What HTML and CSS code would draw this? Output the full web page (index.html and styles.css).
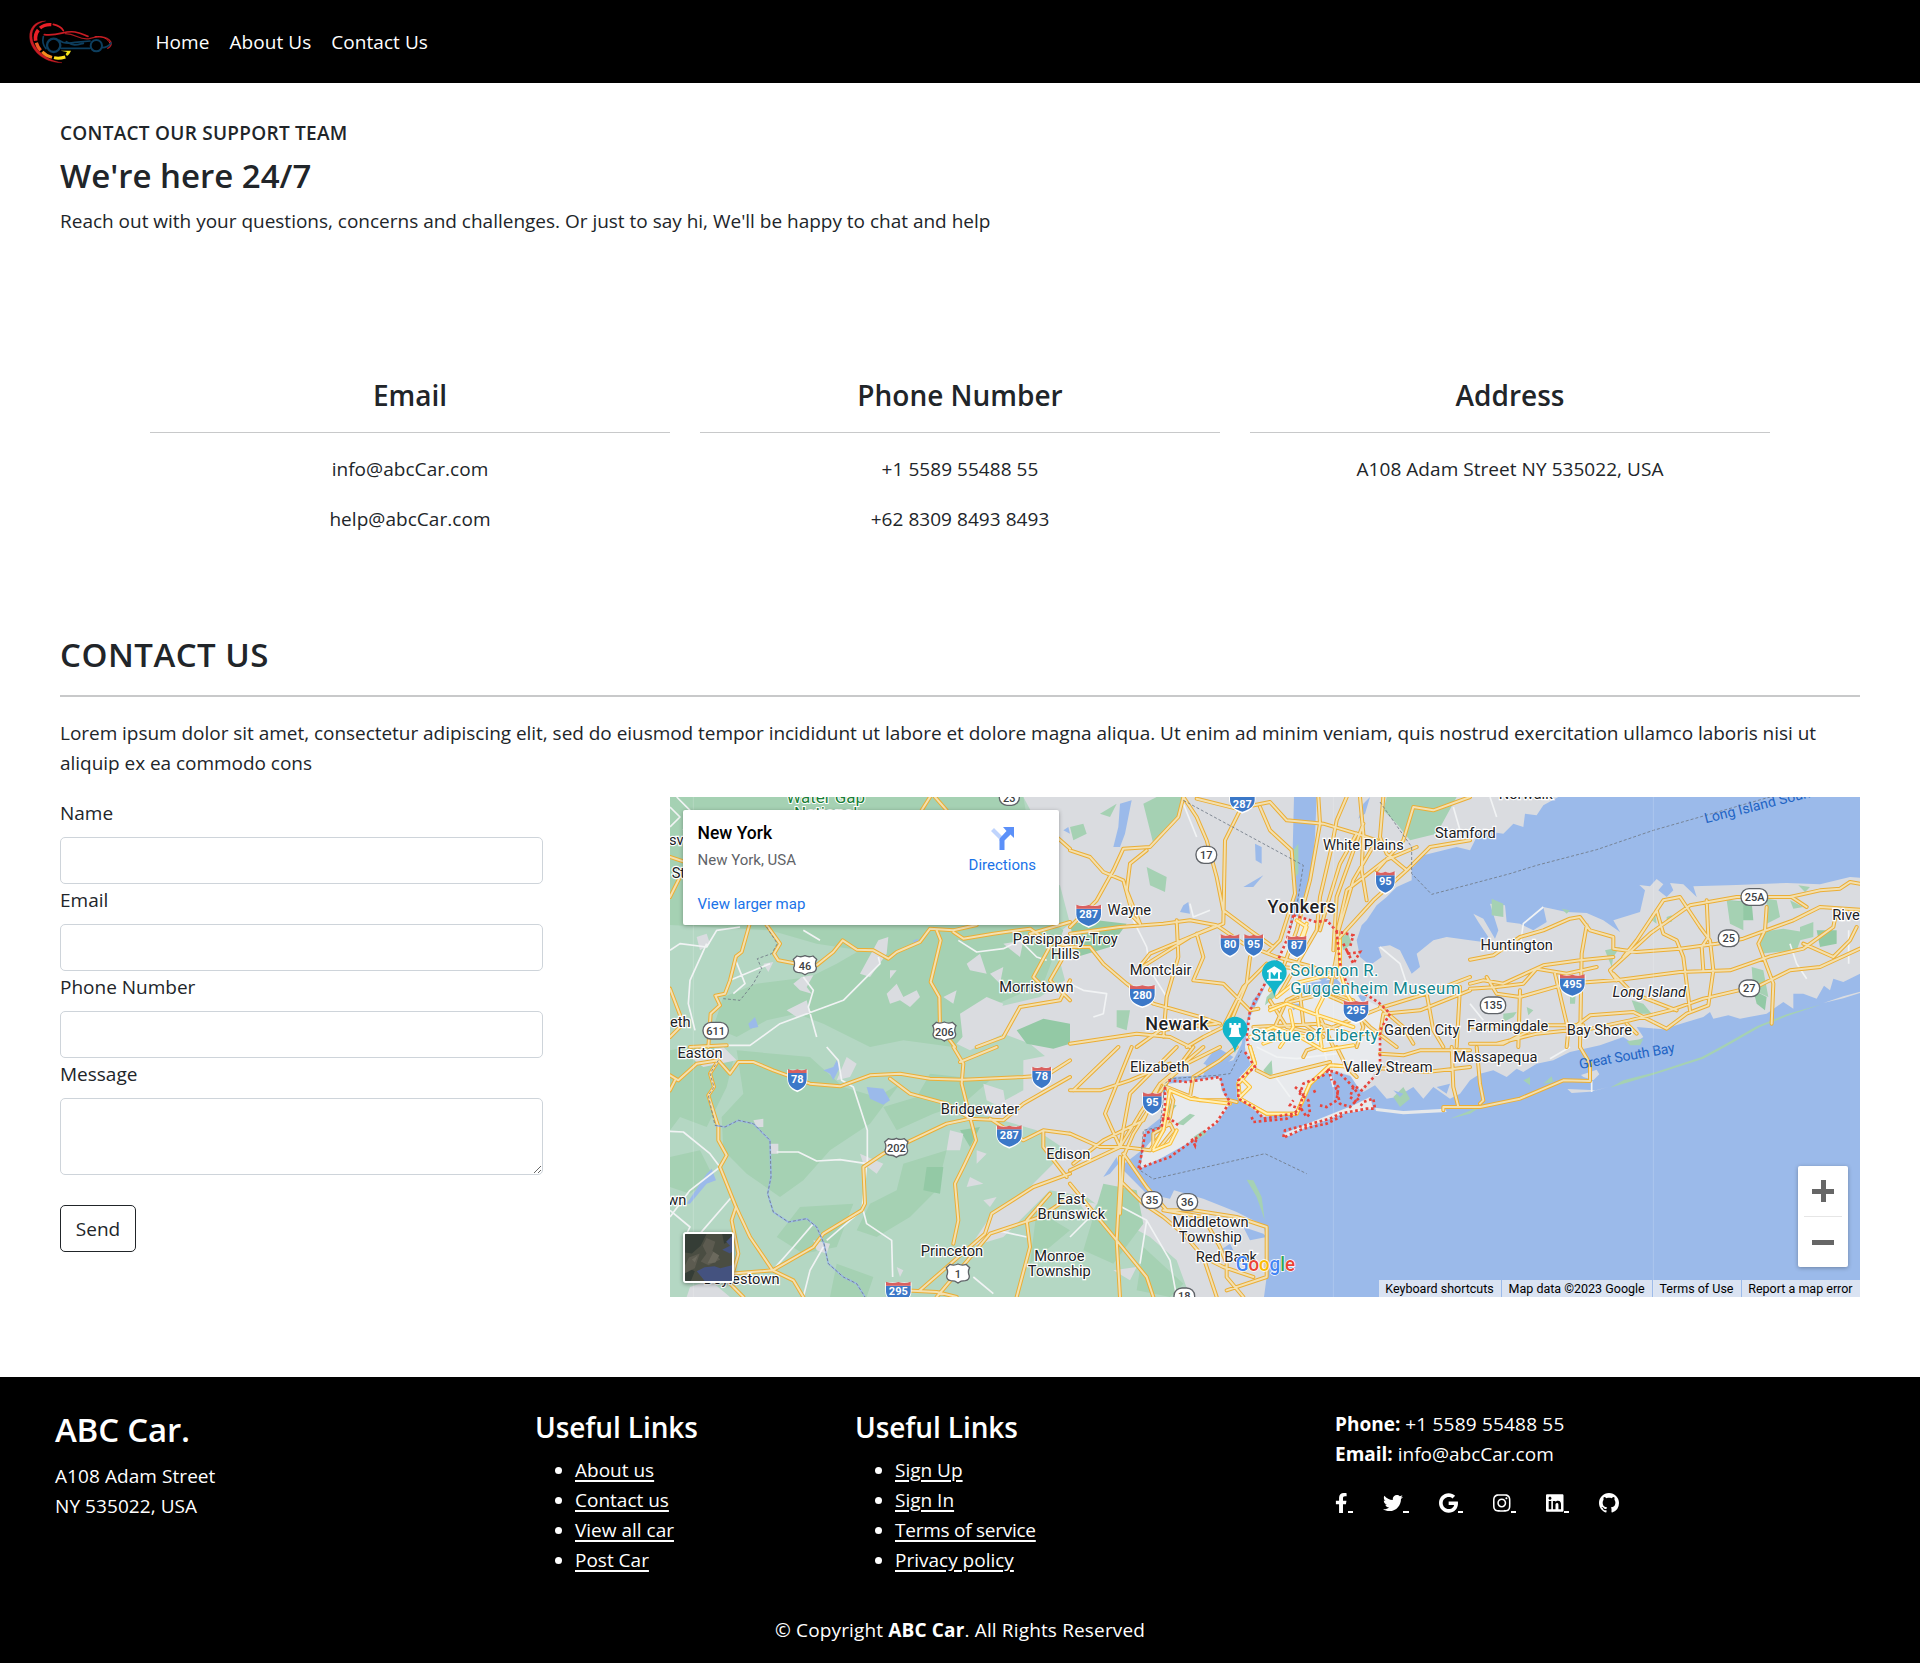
FILE: index.html
```html
<!DOCTYPE html>
<html lang="en">
<head>
<meta charset="utf-8">
<title>ABC Car - Contact Us</title>
<link rel="stylesheet" href="styles.css">
</head>
<body>
<header class="navbar">
  <svg class="logo" viewBox="81 51 261 144" fill="none" stroke-linecap="round">
    <path d="M136 60C104 60 88 82 89 108C90 146 130 186 186 185C145 180 97 146 96 106C95 83 110 66 136 60Z" fill="#c91c24" stroke="#c91c24"/>
    <path d="M154 71C140 70 128 74 120 81" stroke="#ec2027" stroke-width="10" stroke-linecap="butt"/>
    <path d="M115 87C108 95 105 106 107 119" stroke="#ec2027" stroke-width="11" stroke-linecap="butt"/>
    <path d="M109 125C112 135 116 142 122 148" stroke="#ef5a25" stroke-width="10" stroke-linecap="butt"/>
    <path d="M127 152C135 161 145 166 156 169" stroke="#f68b1f" stroke-width="9" stroke-linecap="butt"/>
    <path d="M162 170C174 173 186 171 196 168" stroke="#fde21c" stroke-width="9" stroke-linecap="butt"/>
    <path d="M182 149H213C210 156 207 160 201 165L197 160L201 153Z" fill="#f5e51d"/>
    <path d="M160 70C175 73 185 80 190 89" stroke="#d81f26" stroke-width="5"/>
    <path d="M133 101C180 106 190 88 225 93C250 97 255 105 264 106" stroke="#c91c24" stroke-width="5"/>
    <path d="M196 98C230 98 235 118 268 113C290 105 320 104 332 122C336 130 331 139 323 142" stroke="#a81b20" stroke-width="4"/>
    <path d="M285 107C305 104 325 113 330 127" stroke="#d81f26" stroke-width="3"/>
    <path d="M130 107C126 122 132 136 138 143M178 118C190 128 205 128 225 124L270 120M183 142H270M306 140C320 140 328 133 333 126M199 122C220 136 230 132 250 127" stroke="#0d3e5e" stroke-width="5"/>
    <circle cx="161" cy="133" r="20" stroke="#0d3e5e" stroke-width="7"/>
    <circle cx="289" cy="134" r="17" stroke="#0d3e5e" stroke-width="6"/>
  </svg>
  <nav class="nav-links"><a>Home</a><a>About Us</a><a>Contact Us</a></nav>
</header>

<main>
  <section class="intro">
    <h5>CONTACT OUR SUPPORT TEAM</h5>
    <h2>We're here 24/7</h2>
    <p>Reach out with your questions, concerns and challenges. Or just to say hi, We'll be happy to chat and help</p>
  </section>

  <section class="channels">
    <div class="channel"><h3>Email</h3><p>info@abcCar.com</p><p>help@abcCar.com</p></div>
    <div class="channel"><h3>Phone Number</h3><p>+1 5589 55488 55</p><p>+62 8309 8493 8493</p></div>
    <div class="channel"><h3>Address</h3><p>A108 Adam Street NY 535022, USA</p></div>
  </section>

  <section class="contact">
    <h2>CONTACT US</h2>
    <p>Lorem ipsum dolor sit amet, consectetur adipiscing elit, sed do eiusmod tempor incididunt ut labore et dolore magna aliqua. Ut enim ad minim veniam, quis nostrud exercitation ullamco laboris nisi ut<br>aliquip ex ea commodo cons</p>
    <div class="contact-row">
      <form class="contact-form">
        <label>Name</label><input type="text">
        <label>Email</label><input type="text">
        <label>Phone Number</label><input type="text">
        <label>Message</label><textarea></textarea>
        <button type="button">Send</button>
      </form>
      <div class="map">
        <svg class="map-canvas" viewBox="0 0 3570 1500">
          <defs>
            <g id="roads">
              <path d="M0 180L60 200M0 300L40 220M238 384L215 465L198 478L180 550L165 590L136 596L150 625L122 650L115 750M290 384L330 440L312 470L325 490L380 500L440 505L490 465L518 430L560 458L610 460L655 485L680 465L750 435L780 395L850 400L920 384M800 400L812 430L782 555L808 600L810 690L855 750M0 575L40 680L0 720M60 750L170 745"/>
              <path d="M850 405L880 425L970 410L1080 395L1130 430L1200 450M1150 430L1090 540L1120 570M1200 550L1170 610L1050 630L1000 720L920 750M1180 480L1140 550L1200 610M1200 375L1080 410"/>
              <path d="M780 0L755 40M795 0L830 40M1160 120L1200 155"/>
              <path d="M0 835L25 850L80 800L145 790L180 830L205 795L250 795L310 820L420 860L510 868L600 835L690 830L780 845L880 848L1060 840L1130 835L1200 790M15 850L0 880M145 790L120 830L132 870L115 895L145 990L145 1030L170 1075L150 1110L198 1230L185 1270L205 1370L180 1460L220 1500"/>
              <path d="M198 1230L240 1320L308 1420L430 1350L460 1310L575 1240L585 1220L580 1110L640 1070L830 980L900 965L1000 970L1060 920L1200 840M850 750L880 800L875 860L900 960L918 1030L880 1110L855 1160L865 1270L850 1340M870 795L980 750M660 845L720 890L830 920L900 965M960 965L1060 1030L1120 1000L1200 1010M1120 1000L1120 1050L1190 1140M180 1430L308 1420L370 1450L400 1500M1200 1130L1090 1170L965 1250L945 1310L750 1480M1200 1200L1110 1260L960 1310L800 1500M1140 1190L1070 1270L1080 1350L1040 1500M700 1480L800 1485L860 1500"/>
              <path d="M1540 0L1525 60L1440 150L1360 155L1330 220L1280 310L1200 390M1540 0L1580 60L1610 130L1640 240L1660 340L1740 400L1810 450M1710 40L1665 130L1660 380L1560 420L1440 470L1400 520M1580 5L1700 35L1800 15L1850 70L1960 80L2060 110L2120 130M1770 30L1800 100L1865 160L1875 290L1830 430L1795 465M1200 160L1260 180L1300 225L1360 250L1390 360L1410 380M1430 160L1380 200L1370 280L1410 380M1200 410L1350 390L1480 380L1560 370L1640 385L1720 440L1820 480L1930 510L1980 540M1520 370L1525 480L1490 600L1480 720M1200 450L1260 450L1300 500L1370 560L1450 620L1590 660L1650 680M1400 520L1480 470L1560 420L1630 390M1560 750L1500 720L1400 710L1200 740M1400 750L1470 700L1550 690L1640 680M1580 410L1600 480L1570 550L1660 560L1740 640L1765 635M1740 480L1730 560L1680 680L1600 720L1550 750M1790 500L1720 570L1660 690"/>
              <path d="M1945 0L1950 80L1920 250L1880 400L1840 510L1800 580M2030 0L2000 70L1985 150L1950 300L1940 400L1830 590M2060 110L2010 200L1970 330L1950 400M2080 80L2000 300L1990 460M2120 130L2050 250L2000 420M2240 150L2145 190L2030 280L2005 390L2000 540M2400 130L2280 150L2210 220L2110 310L2010 420L1980 580M2210 220L2150 170L2130 120L2140 0M2070 0L2080 110L2075 220L2090 310M2400 0L2290 40L2230 30L2200 130L2120 220M1840 510L1920 520L1980 520M1800 610L1850 690L1940 710L2040 670L2140 630L2270 590L2400 540M1800 630L1960 590L2030 620L2100 690L2180 750M1810 700L1850 610L1890 590L1900 680L1960 720M1750 690L1950 680L2040 710L2130 710L2140 650L2250 640L2400 580M1950 660L1990 750M2060 750L2080 690L2050 610L1990 590M2130 630L2200 690L2230 740M2270 590L2290 700L2320 750M2370 570L2360 750"/>
              <path d="M2400 488L2470 475L2550 420L2620 400L2700 365L2730 360L2760 400L2830 420L2830 455L2900 465L3030 455L3140 440L3220 425L3370 370L3450 330L3570 338M2750 385L2735 470L2730 750M2400 560L2440 550L2500 560L2620 505L2730 490L2830 480M2400 575L2480 570L2560 560L2600 515L2690 530L2780 510M2450 540L2480 590L2550 600L2690 560L2850 548L3030 525L3180 520L3300 478L3400 455L3490 390L3500 340M2655 530L2695 700L2690 750M2550 580L2545 750M2840 550L2820 520L2940 410L3060 325L3200 300L3360 300L3450 280L3510 275L3540 255L3570 260M2860 480L2900 430L2960 340L2980 310L3030 300L3090 390L3120 430L3130 520L3115 625L3050 650L2990 695L2890 645L2760 655L2700 700L2600 710L2480 740M2960 340L2980 410L3020 430L3040 480L3060 640M3110 310L3115 420L3095 450L3100 520M3290 330L3285 400L3265 440L3310 560L3305 680M3400 440L3490 480L3540 430L3560 390M3365 300L3410 330M2740 700L2880 670L3000 640L3100 605L3270 565L3360 520L3450 510L3570 455M2400 690L2570 685L2740 685M2870 680L2900 710M2400 740L2500 740L2600 690M2830 530L2890 590L3020 640"/>
              <path d="M1345 750L1210 880M1520 750L1380 890L1350 1050L1200 1120M1600 750L1470 860L1410 950L1350 1050M1570 750L1480 870L1390 1010L1360 1080L1350 1250M1650 750L1550 800L1480 860M1200 1010L1290 1050L1360 1050L1440 1060L1480 1000L1500 960L1510 910L1490 870L1590 910L1680 910L1700 915M1385 750L1305 950L1350 1050M1500 800L1380 850L1290 880L1200 880M1350 1080L1350 1150L1420 1220L1480 1260L1540 1310L1600 1380L1640 1500M1350 1150L1340 1330L1350 1500M1200 1160L1340 1330L1430 1440L1450 1500M1360 1070L1430 1170L1490 1240L1570 1240L1700 1260L1790 1290L1790 1440L1670 1480M1480 1240L1600 1260L1650 1350L1670 1400L1670 1440L1720 1500M1210 1100L1300 1030L1420 970L1470 860M1600 1380L1660 1410L1750 1440M1450 1060L1450 1010L1500 980L1510 1000L1470 1050M1560 900L1570 840L1650 790L1700 750"/>
              <path d="M1740 750L1755 800L1705 860L1710 905L1790 950L1880 950L1920 860L1980 805L2150 815M1760 820L1800 840L1920 810L1980 795M2000 750L2030 810L2060 840M1900 780L1910 760L1940 750M2130 770L2200 775L2250 760L2400 760M2150 815L2270 825L2400 810M2345 750L2350 870L2365 930L2320 930L2320 940M2365 930L2430 930L2550 905L2680 850L2760 852L2760 800L2730 750M2420 750L2430 860L2440 910L2430 920"/>
            </g>
            <path id="streets" d="M1800 640L1850 620L1930 650L2050 690M1740 720L1810 690L1890 720L1960 760L2050 745M1820 600L1870 560L1990 530M1880 480L1910 390L1880 370M1910 380L1890 430M1830 750L1870 690L1860 640M1960 600L1940 640L1955 750M2010 430V520L2030 590L2060 640M1780 740L1860 710L1950 725M1720 850L1740 870L1710 900M1740 750L1755 800L1705 860L1710 905L1790 950L1880 950L1920 860L1980 805L2080 812M1500 880L1560 905L1680 920M1500 880L1480 1000L1450 1055M1520 1000L1500 1040L1450 1060"/>
            <g id="interstate"><path d="M-28-24H28V0C28 20 14 32 0 38C-14 32-28 20-28 0Z" fill="#fff" stroke="#fff" stroke-width="5"/><path d="M-28-17H28V0C28 20 14 30 0 35C-14 30-28 20-28 0Z" fill="#3b78c8"/><path d="M-28-17V-29C-19-24-9-24 0-28C9-24 19-24 28-29V-17Z" fill="#d9605f"/></g>
            <g id="interstate-wide"><path d="M-37-24H37V0C37 20 18 32 0 38C-18 32-37 20-37 0Z" fill="#fff" stroke="#fff" stroke-width="5"/><path d="M-37-17H37V0C37 20 18 30 0 35C-18 30-37 20-37 0Z" fill="#3b78c8"/><path d="M-37-17V-29C-25-24-12-24 0-28C12-24 25-24 37-29V-17Z" fill="#d9605f"/></g>
            <path id="us-route" d="M-24-27Q-12-22 0-28Q12-22 24-27L35-17Q28-5 34 8Q34 20 22 22Q8 22 0 29Q-8 22-22 22Q-34 20-34 8Q-28-5-35-17Z"/>
          </defs>

          <rect width="3570" height="1500" fill="#9bbaea"/>
          <path class="land" d="M0 0H1872L1868 160L1876 230L1866 330L1856 430L1815 500L1782 570L1748 610L1725 690L1715 740L1690 790L1650 800L1640 760L1610 800L1600 835L1500 840L1480 870L1475 960L1425 1000L1415 1060L1350 1110L1390 1150L1430 1190L1500 1205L1512 1180L1600 1205L1700 1245L1780 1285L1790 1330L1790 1440L1782 1500H0Z"/>
          <path class="land" d="M1940 0H2665L2620 25L2600 55L2565 50L2560 90L2530 80L2500 110L2430 100L2400 160L2360 150L2260 175L2225 215L2225 250L2180 270L2150 300L2120 325L2090 370L2075 385L2060 430L2070 480L2100 505L2135 480L2125 450L2160 445L2190 460L2225 530L2250 510L2240 470L2290 430L2330 420L2400 430L2440 435L2455 420L2425 375L2410 350L2440 365L2475 425L2485 400L2460 320L2505 325L2510 375L2550 380L2590 400L2630 375L2620 330L2690 345L2750 348L2800 370L2850 405L2830 370L2910 345L2925 280L2908 264L2940 268L2960 246L2980 262L2965 280L2990 300L3010 280L3000 258L3040 262L3080 300L3070 268L3200 264L3350 258L3450 262L3540 240L3570 242V530L3520 555L3490 545L3480 580L3462 566L3440 605L3400 590L3370 590L3370 635L3340 615L3290 650L3210 665L3175 655L3130 665L3120 645L3100 660L3050 675L2980 697L2900 690L2920 720L2890 740L2860 720L2790 745L2700 765L2650 790L2600 800L2560 825L2540 815L2510 840L2470 820L2430 830L2400 850L2370 890L2340 905L2290 870L2260 905L2230 870L2180 900L2150 905L2115 865L2080 885L2050 840L2000 825L1940 830L1900 880L1880 950L1780 960L1700 900L1700 860L1745 810L1725 760L1730 700L1760 620L1790 600L1830 500L1870 400L1900 330L1925 230L1935 120Z"/>
          <path class="city" d="M1870 355L1940 375L1970 370L2000 410L2010 490L2030 560L2070 600L2130 630L2165 660L2130 700L2130 790L2100 850L2070 880L2040 835L1980 815L1920 850L1880 945L1780 955L1705 900L1700 850L1745 800L1725 750L1735 670L1780 580L1830 470Z"/>
          <path class="city" d="M1495 860L1650 840L1655 880L1680 920L1640 980L1570 1030L1480 1080L1410 1115L1420 1060L1470 1000L1480 900Z"/>
          <path class="city" d="M1840 1010L1900 985L2050 925L2100 900L2110 935L2020 950L1900 995L1845 1022Z"/>
          <path class="water" d="M1900 560L2000 545L2030 580L1960 600L1880 590ZM1920 530L1980 540L1960 555ZM1640 750L1690 780L1650 820L1600 800ZM1850 600L1870 620L1900 620L1870 640ZM2060 590L2090 600L2080 620ZM2100 0L2085 50L2065 65L2080 20ZM1350 20L1385 10L1365 110L1350 150L1330 150L1345 90ZM1720 270L1780 235L1750 270ZM1755 140L1775 150V200L1757 190ZM1540 325L1555 315L1560 350L1530 345Z"/>
          <path class="woods-light" d="M0 0H1060L1125 120L1060 230L1170 265L1200 380L1150 420L1185 550L1110 600L940 640L860 740L900 760L1000 710L1080 740L1140 790L1060 880L930 950L1100 1000L1190 1060L1080 1170L960 1260L900 1350L1000 1320L1140 1180L1250 1200L1330 1260L1440 1320L1520 1390L1560 1500H0Z"/>
          <path class="woods" d="M0 0H1060L1090 170L1050 300L1180 400L1120 560L960 630L850 750L700 730L600 750L460 680L380 650L290 670L200 720L130 690L160 600L260 560L420 540L500 500L570 460L440 440L300 400L0 384ZM0 760L110 740L190 790L170 870L110 990L30 960L0 1000ZM200 760L420 780L520 870L620 900L690 860L600 980L480 1060L400 1150L330 1200L230 1130L160 1060L155 960L220 890ZM780 830L960 850L880 920L790 950L680 1000L640 930L740 900ZM700 1100L830 1060L800 1180L720 1260L620 1320L560 1300L600 1220L680 1180ZM390 1230L550 1220L500 1350L400 1370L320 1320ZM1300 1160L1400 1180L1420 1280L1330 1400L1240 1360ZM1420 1350L1540 1460L1500 1500L1400 1480ZM1100 1240L1200 1300L1080 1400ZM0 1080L90 1060L130 1140L60 1190L0 1170ZM500 1400L610 1440L590 1500L480 1500Z"/>
          <path class="woods-dark" d="M1040 700L1120 665L1200 680V740L1150 755L1070 740ZM1200 380L1280 370L1370 380L1320 450L1220 480ZM770 1110L820 1110L810 1190L760 1180ZM870 1000L930 990L900 1050ZM3175 310L3245 315L3250 370L3180 370ZM3440 400L3500 400L3500 440L3450 450ZM3250 580L3290 600L3285 640L3260 620Z"/>
          <path class="woods" d="M1420 20L1460 0H1540L1530 60L1450 140ZM1200 90L1240 80L1250 110L1210 130ZM1290 50L1340 20L1320 60ZM1430 210L1490 240L1485 285L1440 265ZM1870 160L1885 140L1885 230L1865 250ZM2150 0H2360L2300 110L2220 130L2180 80L2140 40ZM2010 420L2035 410L2045 440L2020 460ZM1790 600L1820 570L1815 600L1785 625ZM1340 640L1380 640L1370 700L1340 690ZM2465 305L2500 320L2500 360L2465 355ZM2675 335L2700 340L2690 350ZM2805 460L2850 450L2830 480L2825 510ZM2700 555L2720 555L2715 620L2700 620ZM2500 650L2540 645L2530 660L2500 675ZM2885 610L2920 620L2945 650L2900 650ZM2945 350L2955 345L2960 380L2945 370ZM2990 360L3005 355L3005 375L2990 375ZM3170 310L3220 315L3220 400L3180 380ZM3290 305L3320 310L3330 360L3290 380ZM3270 405L3340 395L3400 405L3380 460L3270 470ZM3390 390L3430 375L3430 420L3390 430ZM3245 510L3280 520L3295 600L3250 580ZM3360 310L3400 330L3370 335ZM3385 265L3420 270L3405 285ZM2570 630L2590 640L2575 655ZM1500 920L1520 925L1500 950L1490 945ZM1520 980L1560 950L1575 955L1540 985ZM1570 1020L1600 1000L1610 1010L1580 1030ZM1780 820L1805 790L1808 830L1795 840ZM1730 1148L1750 1150L1775 1200L1784 1270L1774 1240L1760 1200ZM2170 900L2200 870L2220 905L2190 930ZM2560 850L2580 840L2580 865ZM2620 860L2645 838L2650 855ZM2870 733L2920 725L2910 745L2880 745ZM3455 622L3350 658L3270 690L3165 750L3100 785L2955 832L2820 872L2860 850L2955 826L3095 780L3160 745L3260 688L3350 652ZM2340 965L2440 925L2400 950Z"/>
          <path class="land" d="M3460 618L3520 598L3570 584V588L3520 604ZM2692 876L2780 880L2815 870L2760 884L2705 888ZM2733 834L2780 818L2788 832L2770 850L2740 840Z"/>
          <path class="land" d="M395 540L430 535L410 570L425 590L390 580L370 560ZM570 530L625 430L655 420L650 470L600 540ZM660 620L650 590L680 560L700 600L740 580L750 600L720 630L690 610ZM350 640L410 610L420 650L380 660ZM80 420L110 410L120 440L90 460ZM870 650L950 600L1000 620L970 690L880 740ZM890 500L930 470L950 530L900 520ZM960 530L1000 510L990 560ZM820 600L860 580L850 620ZM1000 440L1060 430L1050 480ZM280 500L310 495L295 525ZM660 520L680 520L660 545ZM530 780L560 800L540 840L500 850ZM940 860L1000 880L1010 940L950 910ZM1060 790L1160 770L1180 830L1060 880ZM840 1000L880 1010L870 1060L830 1060ZM920 1060L950 1070L920 1100ZM900 1140L940 1160L890 1170ZM940 1210L980 1200L960 1230ZM570 1070L640 1100L620 1130L580 1100ZM300 1040L325 1040V1070L300 1070ZM250 970L280 965V990L260 990ZM430 1330L480 1340L470 1370L440 1360ZM60 1470L120 1450L180 1500H50ZM680 1410L700 1420L690 1440ZM1220 1210L1280 1220L1260 1260ZM1330 1420L1400 1410L1380 1450ZM60 780L160 750L200 790L100 810Z"/>
          <path class="water" d="M590 870L640 875L660 910L640 923L600 905ZM460 820L490 810L500 790L510 810L490 850L480 830ZM235 680L255 660L265 690L240 695ZM50 1220L110 1130L125 1115L138 1150L110 1160L60 1220ZM730 430L745 425L742 440L730 440ZM1195 90L1180 100L1200 110ZM1300 1140L1340 1080L1345 1100L1320 1130ZM1650 1360L1680 1340L1690 1360L1660 1370ZM2170 880L2200 890L2190 900ZM1720 1290L1780 1310L1790 1320L1740 1330ZM2300 870L2340 860L2330 890Z"/>
          <path class="beach" d="M2118 942L2200 952L2330 945L2325 935L2200 942L2115 932Z"/>
          <path class="lane" d="M0 30L30 60L0 90M20 0L60 40L40 100M0 460L30 440L110 450L140 400L210 390M110 440L60 550L55 620L75 700M195 485L225 560L190 590M180 550L300 500M400 540L430 580L415 630L440 720M165 745L240 745L330 680L520 610L630 500L625 480M400 400L450 430M865 430L920 465L1000 455L1050 430L1100 480L1130 490M470 750L505 790L515 850L550 870L592 1000V1100M320 1065L385 1065L440 1092L510 1088L590 1100M0 1003L40 1005L120 1070L150 1110L60 1180L0 1260M185 1200L90 1310M590 1100L577 1230L590 1280L665 1330L668 1440M575 1240L470 1330M430 1280L370 1350L308 1420M460 1350L420 1420L400 1500M0 1240L60 1290L40 1330M980 1300L1070 1320M910 1440L970 1490M1370 300L1390 370L1430 450L1440 520L1490 600M1560 320L1570 360L1620 340M1540 20L1580 120M1200 560L1240 580L1310 590L1300 650L1270 660M1355 1230L1430 1270L1500 1390L1520 1500M1430 1270L1410 1400M1290 1230L1200 1320M2130 450L2190 500L2210 560L2200 590M1760 750L1820 780L1880 785L2000 770M1810 830L1860 900M1960 750L1990 870M2350 30L2370 100M2460 0L2480 60M2550 450L2560 380L2620 330M2400 620L2440 670M3360 440L3380 500L3410 545M3536 400V500M2640 785L2700 750M2765 852V885"/>
          <g class="motorway"><use href="#roads" class="casing"/><use href="#roads" class="surface"/></g>
          <g class="city-roads"><use href="#streets" class="casing"/><use href="#streets" class="surface"/></g>
          <path class="river" d="M135 985L165 990L205 970L250 980L300 1030L303 1140L293 1190L310 1245L355 1275L410 1265L440 1290L462 1340L475 1400L520 1440L560 1460L585 1500"/>
          <path class="state-line" d="M290 390L322 440L305 470L262 485L275 515L250 560L210 610L160 605M145 790L120 830L132 870L115 895L135 985L165 990L205 970L250 980L300 1030L303 1140L293 1190L310 1245L355 1275L410 1265L440 1290L462 1340L475 1400L520 1440L560 1460L585 1500M1540 10L1660 75L1900 205L1880 330L1860 400M2130 15L2225 150L2225 230L2285 292L2400 262L2520 230L2600 205L2780 158L2950 100L3160 40L3300 0M1715 760L1680 830L1640 835L1500 845L1485 860L1470 990L1420 1000L1410 1120L1450 1146L1785 1070L1910 1130"/>
          <path class="city-limit" d="M1870 355L1940 375L1970 370L2000 403L2050 415L2040 450M1870 355L1850 430L1815 510L1785 560L1740 640L1730 720L1735 745M2000 403L2010 500L2030 560L2100 600L2130 620L2160 650L2130 700L2130 820L2075 880L2050 865M2020 440L2035 470L2070 465L2050 500L2030 460M1725 765L1755 810L1705 850L1705 905L1750 930L1780 965L1870 950L1890 935L1860 925L1870 910M1745 960L1750 975L1850 965L1880 950M1495 850L1550 855L1650 840L1665 890L1680 915L1640 975L1570 1030L1500 1080L1430 1105L1405 1118L1415 1070L1425 1010L1475 990L1485 930L1485 865M1475 965L1500 965L1525 985M1565 1025L1575 1045L1580 1020M1840 1020L1845 1000L1905 985L1980 965L2010 950L2090 935L2115 935L2110 905L2080 915L2070 930M1845 1020L1900 995L1970 980L2020 955M1875 870L1900 890L1890 930L1910 960L1920 950L1915 910L1890 890L1900 860L1960 835L1975 820L2010 830L2050 870L2070 900L2040 930L2010 920L2000 880L1990 850L2005 870L2000 910L1970 930L1950 925M1930 885L1940 880M2050 870L2040 900L2060 915M1975 815L1985 850"/>

          <g class="badge">
            <g>
              <use href="#interstate-wide" x="1717" y="9"/><use href="#interstate-wide" x="1256" y="352"/><use href="#interstate" x="1680" y="441"/><use href="#interstate" x="1751" y="441"/><use href="#interstate" x="1881" y="445"/><use href="#interstate" x="2146" y="252"/><use href="#interstate-wide" x="1417" y="593"/><use href="#interstate-wide" x="2058" y="640"/><use href="#interstate-wide" x="2707" y="561"/><use href="#interstate" x="382" y="845"/><use href="#interstate" x="1115" y="838"/><use href="#interstate-wide" x="1018" y="1014"/><use href="#interstate-wide" x="685" y="1483"/><use href="#interstate" x="1447" y="915"/>
            </g>
            <g class="badge-blue"><text x="1717" y="33">287</text><text x="1256" y="364">287</text><text x="1680" y="453">80</text><text x="1751" y="453">95</text><text x="1881" y="457">87</text><text x="2146" y="264">95</text><text x="1417" y="605">280</text><text x="2058" y="652">295</text><text x="2707" y="573">495</text><text x="382" y="857">78</text><text x="1115" y="849">78</text><text x="1018" y="1026">287</text><text x="685" y="1495">295</text><text x="1447" y="927">95</text></g>
            <g class="badge-white">
              <rect x="988" y="-24" width="60" height="49" rx="23"/><rect x="1578" y="148" width="62" height="51" rx="24"/><rect x="99" y="676" width="76" height="50" rx="24"/><rect x="2431" y="600" width="76" height="50" rx="24"/><rect x="3213" y="275" width="80" height="50" rx="24"/><rect x="3145" y="399" width="62" height="50" rx="24"/><rect x="3207" y="549" width="62" height="50" rx="24"/><rect x="1415" y="1184" width="62" height="50" rx="24"/><rect x="1521" y="1190" width="62" height="50" rx="24"/><rect x="1512" y="1473" width="62" height="50" rx="24"/>
              <use href="#us-route" x="405" y="504"/><use href="#us-route" x="823" y="703"/><use href="#us-route" x="679" y="1052"/><use href="#us-route" x="864" y="1429"/>
            </g>
            <g class="badge-black"><text x="1018" y="14">23</text><text x="1609" y="186">17</text><text x="137" y="713">611</text><text x="2469" y="637">135</text><text x="3254" y="312">25A</text><text x="3176" y="436">25</text><text x="3238" y="586">27</text><text x="1446" y="1222">35</text><text x="1552" y="1228">36</text><text x="1543" y="1508">18</text><text x="405" y="518">46</text><text x="823" y="717">206</text><text x="679" y="1065">202</text><text x="864" y="1443">1</text></g>
          </g>
          <g class="place">
            <text x="-3" y="145" text-anchor="start">sv</text><text x="5" y="242" text-anchor="start">St</text><text x="0" y="689" text-anchor="start">eth</text><text x="90" y="782">Easton</text><text x="-8" y="1225" text-anchor="start">wn</text>
            <text x="1378" y="355">Wayne</text><text x="1186" y="440">Parsippany-Troy</text><text x="1186" y="485">Hills</text><text x="1472" y="534">Montclair</text><text x="1099" y="586">Morristown</text><text x="2080" y="158">White Plains</text><text x="2386" y="122">Stamford</text><text x="2567" y="7">Norwalk</text><text x="2540" y="458">Huntington</text><text x="3487" y="370" text-anchor="start">Rive</text><text x="2255" y="713">Garden City</text><text x="2513" y="701">Farmingdale</text><text x="2788" y="714">Bay Shore</text><text x="2476" y="795">Massapequa</text><text x="2154" y="825">Valley Stream</text><text x="1469" y="824">Elizabeth</text><text x="930" y="951">Bridgewater</text><text x="1195" y="1085">Edison</text><text x="1204" y="1221">East</text><text x="1204" y="1265">Brunswick</text><text x="846" y="1376">Princeton</text><text x="1168" y="1393">Monroe</text><text x="1168" y="1437">Township</text><text x="1621" y="1291">Middletown</text><text x="1621" y="1335">Township</text><text x="1669" y="1395">Red Bank</text><text x="215" y="1461">Doylestown</text><text x="2938" y="599" font-style="italic">Long Island</text>
          </g>
          <g class="metro"><text x="1895" y="347" textLength="205">Yonkers</text><text x="1521" y="699" textLength="190">Newark</text></g>
          <g class="park"><text x="467" y="18">Water Gap</text><text x="467" y="65">National</text></g>
          <g class="sea"><text transform="translate(3107 79) rotate(-14)" textLength="350">Long Island Sound</text><text transform="translate(2730 816) rotate(-10)" textLength="290">Great South Bay</text></g>
          <g class="landmark"><text x="1861" y="537" textLength="264">Solomon R.</text><text x="1861" y="590" textLength="510">Guggenheim Museum</text><text x="1743" y="732" textLength="382">Statue of Liberty</text></g>
          <path class="pin" d="M1813 600C1808 565 1776 555 1776 527A37 37 0 0 1 1850 527C1850 555 1818 565 1813 600ZM1695 768C1690 733 1658 723 1658 696A37 37 0 0 1 1732 696C1732 723 1700 733 1695 768Z"/>
          <path fill="#fff" d="M1813 508L1835 521V526H1830V546H1835V551H1791V546H1796V526H1791V521ZM1802 526V545H1824V526H1820L1813 537L1806 526Z"/>
          <path fill="#fff" d="M1678 678H1685V684H1691V678H1699V684H1705V678H1712V692H1706L1708 710L1714 720H1676L1682 710L1684 692H1678Z"/>
          <path d="M1990 0V1500M2950 0V1500M70 0V1500" stroke="#fff" stroke-opacity=".18" stroke-width="3"/>
          <text class="google" x="1697" y="1421" textLength="178" lengthAdjust="spacingAndGlyphs"><tspan fill="#4285f4">G</tspan><tspan fill="#ea4335">o</tspan><tspan fill="#fbbc05">o</tspan><tspan fill="#4285f4">g</tspan><tspan fill="#34a853">l</tspan><tspan fill="#ea4335">e</tspan></text>
        </svg>

        <div class="place-card">
          <div class="place-info"><strong>New York</strong><span>New York, USA</span><a>View larger map</a></div>
          <div class="directions">
            <svg viewBox="0 0 24 24" width="24" height="24"><path fill="#bfd4fd" d="M4 2L1 5L9 13V15L13 11Z"/><path fill="#5b90f9" d="M13 1H24V12L20.5 8.5L14.5 14.5V24H9.500V14.500C9.500 13 10 12 11 11L16.500 5Z"/></svg>
            <a>Directions</a>
          </div>
        </div>
        <svg class="satellite" viewBox="0 0 48 48">
          <rect width="48" height="48" fill="#4a4d42"/>
          <path fill="#353d36" d="M0 0H22L16 12L7 20L0 19ZM0 33L10 38L6 48H0ZM38 0H48V6L40 10Z"/>
          <path fill="#5c5b50" d="M22 4L31 8L28 17L36 26L24 32L16 28L22 20L18 12ZM4 24L15 20L10 35L0 40V32Z"/>
          <path fill="#6b695d" d="M29 18L35 22L31 29L23 30ZM7 26L13 22L10 29Z"/>
          <path fill="#44527f" d="M48 2L42 8L46 12L38 16L46 20L48 18ZM12 38L20 34L30 33L36 35L48 32V48H20L16 43Z"/>
        </svg>
        <div class="zoom"><button class="zoom-in" type="button"></button><button class="zoom-out" type="button"></button></div>
        <div class="credits"><span>Keyboard shortcuts</span><span>Map data ©2023 Google</span><span>Terms of Use</span><span>Report a map error</span></div>
      </div>
    </div>
  </section>
</main>

<footer class="footer">
  <div class="footer-grid">
    <div class="about"><h2>ABC Car.</h2><p>A108 Adam Street<br>NY 535022, USA</p></div>
    <div><h3>Useful Links</h3><ul><li><a>About us</a></li><li><a>Contact us</a></li><li><a>View all car</a></li><li><a>Post Car</a></li></ul></div>
    <div><h3>Useful Links</h3><ul><li><a>Sign Up</a></li><li><a>Sign In</a></li><li><a class="snug">Terms of service</a></li><li><a>Privacy policy</a></li></ul></div>
    <div class="reach">
      <p><strong>Phone:</strong> <span class="number">+1 5589 55488 55</span><br><strong>Email:</strong> info@abcCar.com</p>
      <div class="social">
        <a><svg width="12.500" height="20" viewBox="0 0 320 512"><path d="M279.14 288l14.22-92.66h-88.91v-60.13c0-25.35 12.42-50.06 52.24-50.06h40.42V6.26S260.43 0 225.36 0c-73.22 0-121.08 44.38-121.08 124.72v70.62H22.89V288h81.39v224h100.17V288z"/></svg></a>
        <a><svg width="20" height="20" viewBox="0 0 512 512"><path d="M459.37 151.716c.325 4.548.325 9.097.325 13.645 0 138.72-105.583 298.558-298.558 298.558-59.452 0-114.68-17.219-161.137-47.106 8.447.974 16.568 1.299 25.34 1.299 49.055 0 94.213-16.568 130.274-44.832-46.132-.975-84.792-31.188-98.112-72.772 6.498.974 12.995 1.624 19.818 1.624 9.421 0 18.843-1.3 27.614-3.573-48.081-9.747-84.143-51.98-84.143-102.985v-1.299c13.969 7.797 30.214 12.67 47.431 13.319-28.264-18.843-46.781-51.005-46.781-87.391 0-19.492 5.197-37.36 14.294-52.954 51.655 63.675 129.3 105.258 216.365 109.807-1.624-7.797-2.599-15.918-2.599-24.04 0-57.828 46.782-104.934 104.934-104.934 30.213 0 57.502 12.67 76.67 33.137 23.715-4.548 46.456-13.32 66.599-25.34-7.798 24.366-24.366 44.833-46.132 57.827 21.117-2.273 41.584-8.122 60.426-16.243-14.292 20.791-32.161 39.308-52.628 54.253z"/></svg></a>
        <a><svg width="19" height="20" viewBox="0 0 488 512"><path d="M488 261.8C488 403.3 391.1 504 248 504 110.8 504 0 393.2 0 256S110.8 8 248 8c66.8 0 123 24.5 166.3 64.9l-67.5 64.9C258.5 52.6 94.3 116.6 94.3 256c0 86.5 69.1 156.6 153.7 156.6 98.2 0 135-70.4 140.8-106.9H248v-85.3h236.1c2.3 12.7 3.9 24.9 3.9 41.4z"/></svg></a>
        <a><svg width="17.500" height="20" viewBox="0 0 448 512"><path d="M224.1 141c-63.6 0-114.9 51.3-114.9 114.9s51.3 114.9 114.9 114.9S339 319.5 339 255.9 287.7 141 224.1 141zm0 189.6c-41.1 0-74.7-33.5-74.7-74.7s33.5-74.7 74.7-74.7 74.7 33.5 74.7 74.7-33.6 74.7-74.7 74.7zm146.4-194.3c0 14.9-12 26.8-26.8 26.8-14.9 0-26.8-12-26.8-26.8s12-26.8 26.8-26.8 26.8 12 26.8 26.8zm76.1 27.2c-1.7-35.9-9.9-67.7-36.2-93.9-26.2-26.2-58-34.4-93.9-36.2-37-2.1-147.9-2.1-184.9 0-35.8 1.7-67.6 9.9-93.9 36.1s-34.4 58-36.2 93.9c-2.1 37-2.1 147.9 0 184.9 1.7 35.9 9.9 67.7 36.2 93.9s58 34.4 93.9 36.2c37 2.1 147.9 2.1 184.9 0 35.9-1.7 67.7-9.9 93.9-36.2 26.2-26.2 34.4-58 36.2-93.9 2.1-37 2.1-147.8 0-184.8zM398.8 388c-7.8 19.6-22.9 34.7-42.6 42.6-29.5 11.7-99.5 9-132.1 9s-102.7 2.6-132.1-9c-19.6-7.8-34.7-22.9-42.6-42.6-11.7-29.5-9-99.5-9-132.1s-2.6-102.7 9-132.1c7.8-19.6 22.9-34.7 42.6-42.6 29.5-11.7 99.5-9 132.1-9s102.7-2.6 132.1 9c19.6 7.8 34.7 22.9 42.6 42.6 11.7 29.5 9 99.5 9 132.1s2.7 102.7-9 132.1z"/></svg></a>
        <a><svg width="17.500" height="20" viewBox="0 0 448 512"><path d="M416 32H31.9C14.3 32 0 46.5 0 64.3v383.4C0 465.5 14.3 480 31.9 480H416c17.6 0 32-14.5 32-32.3V64.3c0-17.8-14.4-32.3-32-32.3zM135.4 416H69V202.2h66.5V416zm-33.2-243c-21.3 0-38.5-17.3-38.5-38.5S80.9 96 102.2 96c21.2 0 38.5 17.3 38.5 38.5 0 21.3-17.2 38.5-38.5 38.5zm282.1 243h-66.4V312c0-24.8-.5-56.7-34.5-56.7-34.6 0-39.9 27-39.9 54.9V416h-66.4V202.2h63.7v29.2h.9c8.9-16.8 30.6-34.5 62.9-34.5 67.2 0 79.7 44.3 79.7 101.9V416z"/></svg></a>
        <a class="last"><svg width="20" height="20" viewBox="0 0 16 16"><path d="M8 0C3.580 0 0 3.580 0 8c0 3.540 2.290 6.530 5.470 7.590.4.070.550-.170.550-.380 0-.190-.010-.820-.010-1.490-2.010.370-2.530-.490-2.690-.940-.090-.230-.480-.940-.820-1.130-.280-.150-.680-.520-.010-.530.630-.010 1.080.580 1.230.820.720 1.210 1.870.870 2.330.660.070-.520.280-.870.510-1.070-1.780-.2-3.640-.890-3.640-3.950 0-.870.310-1.590.820-2.150-.080-.2-.360-1.020.080-2.120 0 0 .670-.210 2.200.820.640-.180 1.320-.270 2-.270s1.360.090 2 .270c1.530-1.040 2.200-.820 2.200-.820.440 1.100.160 1.920.080 2.120.510.560.820 1.270.820 2.150 0 3.070-1.870 3.750-3.650 3.950.290.250.540.730.540 1.480 0 1.070-.010 1.930-.010 2.200 0 .210.150.460.550.380A8.010 8.010 0 0 0 16 8c0-4.420-3.580-8-8-8z"/></svg></a>
      </div>
    </div>
  </div>
  <p class="copyright">© Copyright <strong>ABC Car</strong>. All Rights Reserved</p>
</footer>
</body>
</html>
```
FILE: styles.css
```css
* { box-sizing: border-box; margin: 0; padding: 0; }
body {
  font-family: "Segoe UI", "Open Sans", "Noto Sans", sans-serif;
  font-size: 19px;
  line-height: 30px;
  color: #212529;
  background: #fff;
}
h2, h3, h5 { font-weight: 600; line-height: 1.2; }

.navbar { display: flex; align-items: center; height: 83px; padding-left: 27px; background: #000; }
.logo { width: 87px; height: 48px; }
.nav-links { display: flex; gap: 20px; margin-left: 41.500px; color: #fff; letter-spacing: .06px; }

.intro { padding: 37px 60px 0; height: 264px; }
.intro h5 { font-size: 19px; line-height: 24px; padding-top: 1px; margin-bottom: 9px; letter-spacing: .27px; }
.intro h2, .contact h2, .about h2 { font-size: 33px; line-height: 42px; }
.intro h2 { margin: 10px 0 9px; }
.intro p { letter-spacing: -.01px; }

.channels { display: grid; grid-template-columns: repeat(3, 1fr); gap: 30px; padding: 30px 150px 0; height: 281px; text-align: center; }
.channel h3 { font-size: 28px; line-height: 36px; padding-bottom: 19px; margin-bottom: 21px; border-bottom: 1px solid #c8c9ca; }
.channel p { margin-bottom: 20px; letter-spacing: .05px; }

.contact { padding: 6px 60px 80px; }
.contact h2 { height: 63px; border-bottom: 2px solid #c8c9ca; margin-bottom: 21px; letter-spacing: .5px; }
.contact > p { letter-spacing: -.036px; }
.contact-row { display: flex; justify-content: space-between; margin-top: 19px; }
.contact-form { display: flex; flex-direction: column; width: 483px; }
.contact-form label { padding-top: 1px; margin-bottom: 9px; }
.contact-form input, .contact-form textarea { height: 47px; border: 1px solid #ced4da; border-radius: 5px; background: #fff; }
.contact-form textarea { height: 77px; }
.contact-form button { align-self: flex-start; width: 76px; height: 47px; margin-top: 30px; border: 1px solid #212529; border-radius: 5px; background: #fff; color: #212529; font: inherit; }

.map { position: relative; width: 1190px; height: 500px; overflow: hidden; font-family: Roboto, sans-serif; }
.map-canvas { display: block; width: 1190px; height: 500px; }
.land { fill: #dadce0; }
.city { fill: #e8eaed; }
.water { fill: #9bbaea; }
.beach { fill: #e6e8ea; }
.woods-light { fill: #b4d7c3; }
.woods { fill: #a5d1b3; }
.woods-dark { fill: #93c9a5; }
.lane { fill: none; stroke: #f1f3f4; stroke-width: 5; stroke-linejoin: round; }
.motorway, .city-roads { fill: none; stroke-linejoin: round; stroke-linecap: round; }
.casing { stroke: #ebae35; stroke-width: 12; }
.surface { stroke: #f3e0b0; stroke-width: 6; }
.city-roads .casing { stroke: #fbbf38; }
.city-roads .surface { stroke: #fff0b8; }
.river { fill: none; stroke: #9bbaea; stroke-width: 5; }
.state-line { fill: none; stroke: #6f7884; stroke-width: 2.5; stroke-dasharray: 9 6; }
.city-limit { fill: none; stroke: #e8453c; stroke-width: 8; stroke-dasharray: 8 8; }
.badge text { font-size: 33px; text-anchor: middle; }
.badge-blue { fill: #fff; font-weight: 700; }
.badge-white { fill: #fff; stroke: #5f6368; stroke-width: 4; }
.badge-black { fill: #3c4043; font-weight: 500; }
.place { font-size: 44px; fill: #202124; stroke: #fff; stroke-width: 7; paint-order: stroke; text-anchor: middle; }
.place text[text-anchor="start"] { text-anchor: start; }
.metro { font-size: 54px; font-weight: 500; fill: #202124; stroke: #fff; stroke-width: 7; paint-order: stroke; text-anchor: middle; }
.park { font-size: 51px; fill: #1a7f37; stroke: #fff; stroke-width: 6; paint-order: stroke; text-anchor: middle; }
.sea { font-size: 42px; fill: #2163c4; }
.landmark { font-size: 50px; fill: #12868f; stroke: #fff; stroke-width: 7; paint-order: stroke; }
.pin { fill: #12b5cb; }
.google { font-size: 58px; font-weight: 500; stroke: #fff; stroke-width: 4; paint-order: stroke; }

.place-card { position: absolute; left: 13px; top: 13px; width: 376px; height: 115px; display: flex; justify-content: space-between; padding: 11px 23px 0 14.500px; border-radius: 2px; background: #fff; box-shadow: 0 1px 4px rgba(0,0,0,.3); }
.place-info { display: flex; flex-direction: column; font-size: 15px; line-height: 24px; color: #5f6368; }
.place-info strong { font-size: 17.500px; font-weight: 500; line-height: 24px; color: #000; margin-bottom: 3px; }
.place-info a, .directions a { color: #1a73e8; font-size: 15px; }
.place-info a { margin-top: 20px; }
.directions { display: flex; flex-direction: column; align-items: center; padding-top: 5px; line-height: 24px; }
.directions svg { margin-bottom: 3px; }
.satellite { position: absolute; left: 13px; top: 435px; width: 51px; height: 51px; border: 2px solid #fff; border-radius: 3px; box-shadow: 0 1px 4px rgba(0,0,0,.4); }
.zoom { position: absolute; right: 12px; top: 369px; width: 50px; height: 101px; display: flex; flex-direction: column; padding: 0 6px; border-radius: 2px; background: #fff; box-shadow: 0 1px 4px rgba(0,0,0,.3); }
.zoom button { flex: 1; border: 0; background: linear-gradient(#666, #666) center / 22px 5px no-repeat; }
.zoom .zoom-in { border-bottom: 1px solid #e6e6e6; background: linear-gradient(#666, #666) center / 22px 5px no-repeat, linear-gradient(#666, #666) center / 5px 22px no-repeat; }
.credits { position: absolute; right: 0; bottom: 0; display: flex; gap: 1px; height: 17px; font-size: 12.500px; line-height: 17px; color: #000; }
.credits span { padding: 0 7.400px 0 6.400px; background: rgba(245,245,245,.7); white-space: nowrap; }

.footer { height: 286px; padding: 32px 55px 0; background: #000; color: #fff; }
.footer-grid { display: grid; grid-template-columns: 480px 320px 480px 1fr; height: 206px; }
.about h2 { letter-spacing: -.2px; }
.about p { margin-top: 10px; letter-spacing: .07px; }
.footer h3 { font-size: 28px; line-height: 36px; margin-bottom: 10px; letter-spacing: -.1px; }
.footer ul { padding-left: 40px; }
.footer li a { text-decoration: underline; text-underline-offset: 3px; text-decoration-thickness: 2px; }
.footer li .snug { letter-spacing: -.25px; }
.number { letter-spacing: .2px; }
.social { display: flex; gap: 30px; margin-top: 24px; }
.social a { display: flex; }
.social svg { fill: #fff; }
.social a::after { content: ""; width: 5.500px; border-bottom: 2px solid #fff; }
.social .last::after { display: none; }
.copyright { text-align: center; letter-spacing: .15px; }
```
